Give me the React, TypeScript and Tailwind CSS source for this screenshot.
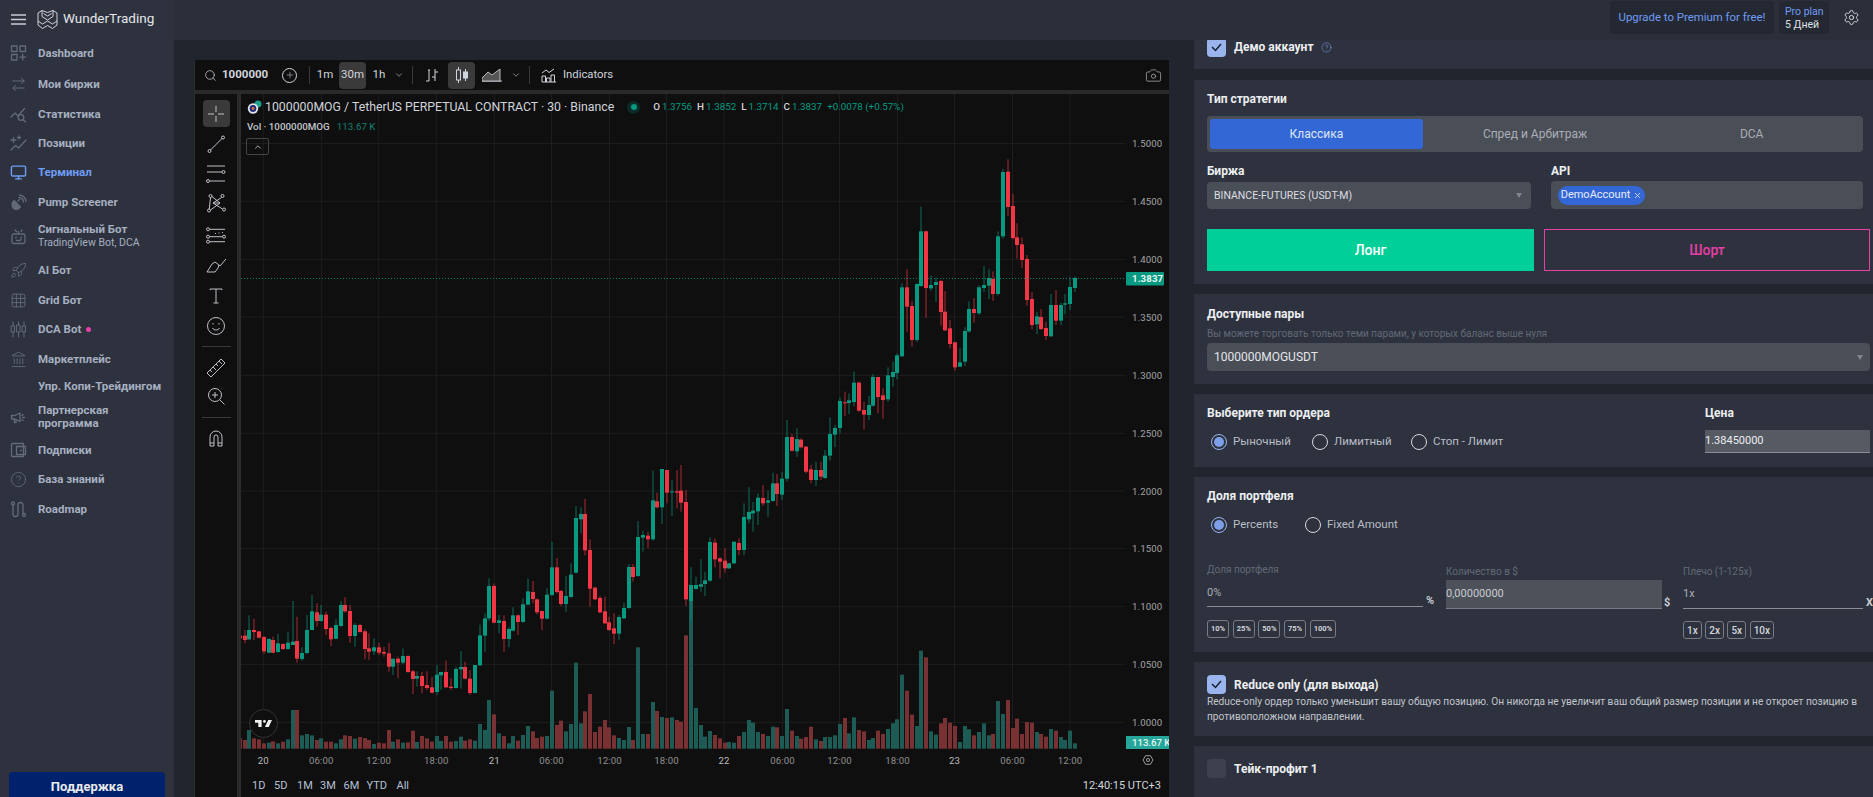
import { ArrowRightLeft, Camera, ChevronDown, ChevronUp, CircleHelp, Grid3x3, Landmark, Monitor, Plus, Rocket, Search, Settings, X } from 'lucide-react';
import type { ReactNode } from 'react';

// [up, bodyTop, bodyBottom, wickTop, wickBottom, volumeTop], numbers read off the chart (y = 470 + v / 3)
type Row = [number, number, number, number, number, number];
const lower: Row[] = [
  [0, 497, 505, 490, 512, 805], [0, 497, 510, 480, 520, 810], [1, 480, 508, 436, 510, 780], [0, 480, 486, 446, 510, 805], [0, 484, 503, 484, 505, 808],
  [0, 501, 544, 498, 552, 820], [1, 507, 548, 505, 550, 818], [0, 510, 548, 500, 550, 814], [1, 520, 546, 492, 548, 820], [0, 522, 537, 520, 540, 815],
  [1, 518, 537, 485, 540, 808], [1, 515, 525, 393, 525, 720], [0, 513, 566, 440, 578, 720], [1, 549, 567, 532, 572, 796], [1, 480, 549, 435, 552, 792],
  [1, 424, 480, 375, 480, 796], [0, 427, 453, 400, 470, 810], [1, 434, 453, 405, 455, 805], [0, 434, 477, 425, 495, 815], [0, 474, 508, 470, 528, 815],
  [1, 465, 506, 448, 508, 820], [1, 405, 468, 393, 470, 808], [0, 405, 424, 382, 428, 796], [0, 423, 498, 405, 518, 798], [1, 465, 498, 460, 530, 806],
  [0, 465, 486, 462, 488, 801], [0, 484, 537, 478, 568, 804], [0, 535, 545, 490, 570, 810], [1, 532, 544, 505, 555, 822], [0, 532, 548, 518, 555, 818],
  [0, 546, 551, 530, 560, 820], [0, 550, 590, 518, 605, 780], [1, 566, 590, 566, 615, 815], [0, 566, 578, 560, 625, 808], [1, 558, 578, 535, 582, 818],
  [0, 558, 606, 556, 608, 817], [0, 604, 627, 600, 672, 782], [1, 618, 626, 604, 650, 816], [0, 618, 648, 606, 670, 798], [0, 645, 654, 604, 660, 805],
  [0, 652, 668, 620, 670, 815], [1, 614, 666, 585, 675, 798], [1, 606, 616, 605, 660, 813], [0, 606, 652, 572, 654, 798], [0, 650, 654, 625, 660, 815],
  [1, 597, 654, 590, 656, 813], [1, 591, 598, 543, 655, 800], [0, 591, 626, 575, 628, 812], [0, 626, 669, 600, 675, 808], [1, 585, 669, 585, 670, 812],
  [1, 496, 586, 464, 588, 762], [1, 445, 497, 430, 545, 780], [1, 348, 445, 325, 452, 690], [0, 348, 458, 340, 460, 733], [1, 451, 459, 435, 490, 790],
  [0, 453, 507, 436, 545, 798], [1, 477, 507, 470, 532, 820], [1, 436, 482, 412, 484, 798], [0, 436, 456, 433, 495, 812], [1, 403, 456, 385, 458, 795],
  [1, 364, 404, 326, 405, 768], [0, 366, 387, 333, 400, 784], [0, 388, 427, 385, 433, 804], [0, 423, 446, 422, 480, 800], [1, 374, 446, 355, 448, 798],
  [1, 292, 375, 216, 378, 662], [0, 292, 366, 264, 370, 765], [0, 363, 402, 360, 408, 752], [1, 378, 402, 318, 425, 784], [1, 314, 381, 280, 383, 762],
  [1, 144, 308, 108, 310, 578], [1, 132, 148, 112, 190, 760], [0, 132, 241, 86, 256, 724], [0, 240, 356, 208, 410, 672], [0, 353, 388, 350, 390, 786],
  [0, 384, 427, 378, 430, 770], [0, 424, 460, 380, 462, 750], [0, 457, 480, 440, 482, 772], [0, 475, 491, 430, 522, 796], [1, 441, 491, 435, 510, 804],
  [1, 414, 445, 398, 447, 810], [1, 291, 414, 282, 416, 771], [0, 291, 321, 282, 335, 810], [1, 201, 318, 153, 320, 532], [1, 195, 203, 182, 245, 792],
  [0, 197, 208, 185, 235, 792], [1, 91, 208, 2, 212, 696], [0, 94, 112, 68, 115, 723], [1, -3, 112, -3, 162, 741], [0, 0, 68, 0, 100, 744],
  [1, 64, 66, 30, 138, 742], [0, 64, 68, 0, 115, 750], [0, 62, 98, -15, 125, 755], [0, 96, 388, 60, 408, 496], [1, 345, 393, 292, 450, 390],
  [1, 345, 357, 320, 358, 714], [1, 343, 350, 268, 365, 765], [1, 331, 342, 305, 378, 800], [1, 216, 332, 202, 335, 783], [0, 218, 268, 205, 292, 795],
  [0, 265, 275, 262, 325, 805], [0, 272, 295, 235, 308, 818], [1, 280, 295, 278, 297, 816], [1, 215, 280, 215, 282, 818], [0, 219, 240, 205, 255, 798],
  [1, 141, 240, 100, 255, 786], [1, 126, 148, 52, 160, 750], [1, 122, 130, 96, 185, 758], [1, 83, 124, 70, 165, 786], [0, 84, 100, 45, 108, 792],
  [1, 91, 98, 62, 140, 798], [1, 40, 93, 8, 95, 770], [0, 40, 72, 12, 108, 772], [1, 26, 74, 5, 90, 798],
];

// same columns, but y = 140 + v / 3; volumeTop stays on the lower scale
const upper: Row[] = [
  [1, 891, 1016, 840, 1025, 717], [0, 891, 932, 882, 935, 782], [1, 897, 934, 865, 950, 798], [0, 899, 922, 895, 925, 806], [0, 920, 995, 918, 1000, 801],
  [0, 988, 1020, 975, 1030, 770], [1, 990, 1020, 965, 1038, 808], [0, 990, 1010, 965, 1020, 813], [1, 947, 1014, 930, 1016, 801], [1, 882, 947, 832, 962, 801],
  [1, 864, 884, 855, 922, 796], [1, 783, 864, 772, 880, 762], [0, 787, 789, 755, 828, 744], [1, 781, 789, 760, 822, 790], [1, 728, 786, 695, 798, 742],
  [0, 728, 812, 725, 815, 780], [0, 810, 824, 785, 868, 784], [1, 795, 825, 768, 840, 810], [1, 711, 797, 702, 800, 804], [0, 711, 771, 711, 820, 782],
  [0, 766, 780, 745, 836, 792], [1, 706, 778, 682, 785, 777], [1, 696, 711, 665, 740, 760], [1, 646, 699, 640, 718, 748], [1, 442, 649, 430, 650, 614],
  [0, 442, 500, 388, 575, 662], [0, 498, 600, 483, 620, 734], [1, 432, 600, 430, 606, 768], [1, 274, 438, 200, 440, 542], [0, 274, 444, 272, 533, 562],
  [1, 435, 445, 407, 452, 784], [1, 426, 435, 413, 486, 794], [0, 423, 516, 420, 557, 760], [0, 515, 571, 453, 573, 744], [0, 565, 612, 540, 625, 758],
  [0, 607, 682, 605, 692, 768], [1, 667, 680, 625, 682, 816], [1, 573, 665, 562, 678, 768], [1, 507, 574, 484, 578, 778], [0, 507, 519, 474, 548, 796],
  [1, 442, 520, 436, 525, 786], [1, 435, 444, 378, 455, 760], [1, 414, 437, 388, 477, 796], [0, 417, 462, 394, 483, 792], [1, 289, 462, 274, 466, 693],
  [1, 96, 289, 87, 296, 732], [0, 95, 201, 58, 228, 690], [0, 198, 294, 162, 298, 774], [0, 292, 315, 250, 356, 746], [0, 313, 360, 292, 384, 792],
  [0, 357, 480, 345, 497, 756], [0, 477, 555, 456, 568, 758], [1, 529, 553, 515, 582, 786], [0, 531, 567, 507, 570, 792], [0, 564, 588, 545, 600, 800],
  [1, 495, 589, 462, 590, 777], [0, 495, 542, 450, 555, 782], [1, 495, 542, 488, 555, 801], [1, 490, 494, 462, 523, 810], [1, 441, 492, 412, 510, 782],
  [1, 414, 444, 409, 456, 820],
];

const allRows = [...lower.map((r) => ({ r, base: 470 })), ...upper.map((r) => ({ r, base: 140 }))];

const prices = ['1.5000', '1.4500', '1.4000', '1.3500', '1.3000', '1.2500', '1.2000', '1.1500', '1.1000', '1.0500', '1.0000'];
const priceY = [143.5, 201.3, 259.3, 317, 375.3, 433.3, 491, 548.7, 606.7, 664.3, 722.3];
const gridX = [263.3, 321.3, 378.7, 436.3, 494.3, 551.5, 609.5, 666.5, 724, 782.5, 839.5, 897.5, 954.5, 1012.5, 1070];
const timeLabels = ['20', '06:00', '12:00', '18:00', '21', '06:00', '12:00', '18:00', '22', '06:00', '12:00', '18:00', '23', '06:00', '12:00'];

function Chart() {
  const n = allRows.length;
  return (
    <svg className="block" width="928" height="677" viewBox="241 94 928 677">
      {priceY.map((y) => <line key={y} x1="241" x2="1125" y1={y} y2={y} stroke="#1d1d1d" />)}
      {gridX.map((x) => <line key={x} x1={x} x2={x} y1="94" y2="749" stroke="#1d1d1d" />)}

      {allRows.map(({ r }, i) => {
        const x = Math.round(1075 - 4.8 * (n - 1 - i));
        const top = 470 + r[5] / 3;
        return <rect key={i} x={x - 2} y={top} width="4" height={748.7 - top} fill={r[0] ? '#1d5c54' : '#7a3134'} />;
      })}
      {allRows.map(({ r, base }, i) => {
        const x = Math.round(1075 - 4.8 * (n - 1 - i));
        const color = r[0] ? '#089981' : '#f23645';
        return (
          <g key={i} fill={color}>
            <rect x={x - 0.5} y={base + r[3] / 3} width="1" height={(r[4] - r[3]) / 3} opacity="0.7" />
            <rect x={x - 2} y={base + r[1] / 3} width="4" height={Math.max(1, (r[2] - r[1]) / 3)} />
          </g>
        );
      })}

      <line x1="241" x2="1125" y1="278.5" y2="278.5" stroke="#089981" strokeDasharray="1 2" opacity="0.8" />

      {prices.map((p, i) => (
        <text key={p} x="1132" y={priceY[i] + 3.5} fontSize="9.6" letterSpacing="0.15" fill="#a4a4a4">{p}</text>
      ))}
      <rect x="1126" y="272" width="38" height="13.5" rx="1" fill="#089981" />
      <text x="1132" y="282.3" fontSize="9.6" fontWeight="700" letterSpacing="0.15" fill="#e8f5f2">1.3837</text>
      <rect x="1126" y="736" width="43" height="13" fill="#26a69a" />
      <text x="1132" y="746" fontSize="9.6" fontWeight="500" fill="#e8f5f2">113.67 K</text>

      {timeLabels.map((t, i) => (
        <text key={i} x={gridX[i]} y="764" fontSize="9.6" letterSpacing="0.15" textAnchor="middle" fill={t.length === 2 ? '#bcbcbc' : '#8f8f8f'}>{t}</text>
      ))}
      <path d="M1143 760l2.5-4.3h5l2.5 4.3-2.5 4.3h-5z" fill="none" stroke="#9a9a9a" />
      <circle cx="1148" cy="760" r="1.6" fill="none" stroke="#9a9a9a" />
      <rect x="241" y="771" width="928" height="1" fill="#2e2e2e" />
    </svg>
  );
}

function Ico({ children, size = 17, w = 1.3 }: { children: ReactNode; size?: number; w?: number }) {
  return (
    <svg width={size} height={size} viewBox="0 0 17 17" fill="none" stroke="currentColor" strokeWidth={w} strokeLinecap="round" strokeLinejoin="round">
      {children}
    </svg>
  );
}

const navIcons: Record<string, ReactNode> = {
  dash: (
    <Ico><rect x="1.5" y="1" width="5.5" height="5.5" /><rect x="10" y="1" width="5.5" height="5.5" /><rect x="1.5" y="9.5" width="5.5" height="5.5" /><path d="M12.7 9.5v5.5M10 12.2h5.5" /></Ico>
  ),
  stat: (
    <Ico><path d="M1 11l4-4 3 3 6.5-7.5" /><circle cx="11" cy="11.5" r="2.8" /><path d="M13 13.5l2.5 2.5" /></Ico>
  ),
  pos: (
    <Ico><path d="M1 15l4.5-4.5 3 2.5L16 5" /><path d="M3.500 2.500v5M1 5h5M9 1v3M7.500 2.500h3" /></Ico>
  ),
  dish: (
    <Ico><path d="M4 6.500l6.500 6.500a5 5 0 0 1-7 1.500 5.500 5.500 0 0 1 .500-8z" fill="currentColor" /><path d="M9 3.500a5 5 0 0 1 4.500 4.500M9.500 1a7.500 7.500 0 0 1 6.500 6.500M8 7l1.500-1.500" /></Ico>
  ),
  bot: (
    <Ico><rect x="2" y="6" width="13" height="9.5" rx="1.5" /><path d="M8.500 6V3.500M5 2l1.500 1.500M12 2l-1 1.500M6 9v1M11 9v1M6.500 12.500h3.500l1-1" /></Ico>
  ),
  dca: (
    <Ico w={1}><path d="M3 1v15M8.500 1v15M14 1v15" /><rect x="1.5" y="5" width="3" height="6" fill="#2d323e" /><rect x="7" y="4" width="3" height="7" fill="#2d323e" /><rect x="12.5" y="5" width="3" height="6" fill="#2d323e" /></Ico>
  ),
  mega: (
    <Ico><path d="M1.500 6.500h3.500l5-2.500v8.500l-5-2.500H1.500zM4 10l.500 3.500h1.500L6 10.500" /><path d="M12 6.500l1-1M12.500 8.500h2M12 10.500l1 1" /></Ico>
  ),
  wallet: (
    <Ico><path d="M2.500 1.500h11v13h-11a1 1 0 0 1-1-1v-11a1 1 0 0 1 1-1z" /><path d="M15.500 4.500h-9v8h9zM10.500 8.500h1" /></Ico>
  ),
  road: (
    <Ico><circle cx="3" cy="2.5" r="1.5" /><circle cx="14" cy="14" r="1.5" /><path d="M3 4v9a2.500 2.500 0 0 0 5 0V4a2.500 2.500 0 0 1 5 0v8.500" /></Ico>
  ),
};

type NavItem = { h: string; icon?: ReactNode; label: string; sub?: string; active?: boolean; dot?: boolean };
const nav: NavItem[] = [
  { h: 'h-[31px]', icon: navIcons.dash, label: 'Dashboard' },
  { h: 'h-[30px]', icon: <ArrowRightLeft size={17} strokeWidth={1.4} />, label: 'Мои биржи' },
  { h: 'h-[30px]', icon: navIcons.stat, label: 'Статистика' },
  { h: 'h-[29px]', icon: navIcons.pos, label: 'Позиции' },
  { h: 'h-[28px]', icon: <Monitor size={17} strokeWidth={2} />, label: 'Терминал', active: true },
  { h: 'h-[32px]', icon: navIcons.dish, label: 'Pump Screener' },
  { h: 'h-[36px]', icon: navIcons.bot, label: 'Сигнальный Бот', sub: 'TradingView Bot, DCA' },
  { h: 'h-[32px]', icon: <Rocket size={17} strokeWidth={1.3} />, label: 'AI Бот' },
  { h: 'h-[28px]', icon: <Grid3x3 size={17} strokeWidth={1.3} />, label: 'Grid Бот' },
  { h: 'h-[30px]', icon: navIcons.dca, label: 'DCA Bot', dot: true },
  { h: 'h-[30px]', icon: <Landmark size={17} strokeWidth={1.3} />, label: 'Маркетплейс' },
  { h: 'h-[24px]', label: 'Упр. Копи-Трейдингом' },
  { h: 'h-[38px]', icon: navIcons.mega, label: 'Партнерская программа' },
  { h: 'h-[28px]', icon: navIcons.wallet, label: 'Подписки' },
  { h: 'h-[30px]', icon: <CircleHelp size={17} strokeWidth={1.2} />, label: 'База знаний' },
  { h: 'h-[30px]', icon: navIcons.road, label: 'Roadmap' },
];

function Sidebar() {
  return (
    <aside className="flex h-full w-[174px] shrink-0 flex-col overflow-hidden bg-[#2d323e]">
      <div className="flex h-[38px] shrink-0 items-center pl-[11px]">
        <svg width="15" height="11" viewBox="0 0 15 11" stroke="#c9ccd3" strokeWidth="1.3"><path d="M0 1h15M0 5.500h15M0 10h15" /></svg>
        <svg className="ml-[11px]" width="21" height="21" viewBox="0 0 21 21" fill="none" stroke="#e4e6ea" strokeWidth="0.9" strokeLinejoin="round">
          <path d="M1 4l4-2.500 5.500 2 5.500-2 4 2.500v12l-4.500 3.500-5-3-5 3L1 16z" />
          <path d="M5 1.500v6l5.500 3.500 5.500-3.500v-6M6.500 4.500l4 2.500 4-2.500M1 12l4.500 3 5-3 5 3 4.500-3" />
        </svg>
        <span className="ml-[5px] text-[13.5px] leading-none text-[#e4e6ea]">WunderTrading</span>
      </div>
      {nav.map((item) => (
        <div key={item.label} className={`${item.h} flex shrink-0 items-center`}>
          <span className={`flex w-[38px] shrink-0 justify-center pr-[2px] ${item.active ? 'text-[#6f9cf4]' : 'text-[#646a78]'}`}>{item.icon}</span>
          <div className={`max-w-[125px] text-[11.5px] leading-[13px] font-bold ${item.active ? 'text-[#6f9cf4]' : 'text-[#a6afc0]'}`}>
            {item.label}
            {item.dot && <span className="ml-[5px] inline-block h-[5px] w-[5px] rounded-full bg-[#e83fa5] align-middle" />}
            {item.sub && <div className="text-[10.5px] font-normal whitespace-nowrap">{item.sub}</div>}
          </div>
        </div>
      ))}
      <div className="mt-auto -mb-[5px] px-[9px]">
        <button className="h-[30px] w-full rounded-t-[4px] bg-[#00216b] text-[13px] font-bold text-[#e8eaee]">Поддержка</button>
      </div>
    </aside>
  );
}

function Sep({ className = '' }: { className?: string }) {
  return <span className={`mr-[5px] ml-[5px] h-[18px] w-px shrink-0 bg-[#3a3a3a] ${className}`} />;
}

function TopToolbar() {
  return (
    <div className="flex h-[30px] shrink-0 items-center bg-[#0f0f0f] pl-[9px] pr-[4px] text-[11.5px] text-[#d1d4dc]">
      <Search size={13} strokeWidth={1.3} />
      <span className="ml-[5px] w-[60px] text-[11.5px] font-bold">1000000</span>
      <span className="flex h-[15px] w-[15px] items-center justify-center rounded-full border border-[#d1d4dc]"><Plus size={10} strokeWidth={1.2} /></span>
      <Sep className="ml-[12px]" />
      <span className="w-[20px] text-center">1m</span>
      <span className="ml-[4px] flex h-[27px] w-[27px] items-center justify-center rounded-[4px] bg-[#3a3a3a]">30m</span>
      <span className="w-[26px] text-center">1h</span>
      <ChevronDown size={10} className="ml-[2px] shrink-0 text-[#9a9a9a]" />
      <Sep className="ml-[8px]" />
      <svg className="ml-[7px] shrink-0" width="14" height="14" viewBox="0 0 14 14" fill="none" stroke="#d1d4dc"><path d="M1 13h3V2M4 3V1M10 1v12M10 4h3M7 9h3" /></svg>
      <span className="ml-[9px] flex h-[27px] w-[27px] shrink-0 items-center justify-center rounded-[4px] bg-[#3a3a3a]">
        <svg width="14" height="16" viewBox="0 0 14 16" fill="none" stroke="#d1d4dc"><path d="M3.500 0v16M10.500 2v12" /><rect x="1.5" y="3" width="4" height="10" fill="#3a3a3a" /><rect x="8.5" y="5" width="4" height="6" fill="#d1d4dc" /></svg>
      </span>
      <svg className="ml-[7px] shrink-0" width="20" height="14" viewBox="0 0 20 14" fill="none" stroke="#b6b9c0"><path d="M0 10l6-6 4 3 8-6v13H0z" fill="#555" /><path d="M0 13h20" /></svg>
      <ChevronDown size={10} className="ml-[9px] shrink-0 text-[#9a9a9a]" />
      <Sep className="ml-[8px]" />
      <svg className="ml-[6px] shrink-0" width="15" height="15" viewBox="0 0 15 15" fill="none" stroke="#d1d4dc"><path d="M1 14V8h3.500v6M5.500 14V10H9v4M10 14V7h3.500v7M1 14h14M1 5l4-3 3 2.500L13 1" /></svg>
      <span className="ml-[7px] text-[11.3px]">Indicators</span>
      <Camera size={17} strokeWidth={1} className="mr-[3px] ml-auto text-[#b6b9c0]" />
    </div>
  );
}

const toolIcons: { h: string; icon: ReactNode; active?: boolean }[] = [
  { h: 'h-[27px]', active: true, icon: <path d="M14 6v6M14 16v6M6 14h6M16 14h6" /> },
  { h: 'h-[34px]', icon: <g><circle cx="7.5" cy="21" r="1.5" /><circle cx="21" cy="7.5" r="1.5" /><path d="M8.500 20L20 8.500" /></g> },
  { h: 'h-[26px]', icon: <g><path d="M5 6h18M5 12h15M8 21h15" /><circle cx="21.5" cy="12" r="1.5" /><circle cx="6" cy="21" r="1.5" /></g> },
  { h: 'h-[32px]', icon: <g><circle cx="7" cy="21.5" r="1.5" /><circle cx="8.5" cy="7" r="1.5" /><circle cx="20.5" cy="7" r="1.5" /><circle cx="22" cy="20.5" r="1.5" /><path d="M8.500 8.500L7.300 20M10 7.500l8 6.500-9.500 7M19.500 8.500L11 14l9.500 6M11 14h7" /></g> },
  { h: 'h-[32px]', icon: <g><path d="M7.500 8.300H23M7.500 15.700h13M7.500 20.700H23" /><circle cx="6" cy="8.3" r="1.5" /><circle cx="6" cy="15.7" r="1.5" /><circle cx="6" cy="20.7" r="1.5" /><circle cx="22" cy="15.7" r="1.5" /><path d="M13 12.500h1M16.500 12h1M20 11.500h1" /></g> },
  { h: 'h-[30px]', icon: <g><path d="M5 20l5-8 3-2 4 3-1 3-3 4z" /><path d="M17 13l1 1 6-7" /></g> },
  { h: 'h-[30px]', icon: <path d="M8 8V7h12v1M14 7v14M11.500 21h5" /> },
  { h: 'h-[30px]', icon: <g><circle cx="14" cy="14" r="8.5" /><path d="M10.500 16c1 1.500 2 2 3.500 2s2.500-.500 3.500-2M11 11v1.500M17 11v1.500" /></g> },
];

function ToolBtn({ icon, active }: { icon: ReactNode; active?: boolean }) {
  return (
    <span className={`flex h-[27px] w-[27px] items-center justify-center rounded-[4px] ${active ? 'bg-[#3a3a3a]' : ''}`}>
      <svg className="shrink-0" width="28" height="28" viewBox="0 0 28 28" fill="none" stroke="#d1d4dc" strokeWidth="0.9">{icon}</svg>
    </span>
  );
}

function LeftToolbar() {
  return (
    <div className="flex h-full w-[42px] shrink-0 flex-col items-center bg-[#0f0f0f] pt-[6px]">
      {toolIcons.map((t, i) => (
        <div key={i} className={`${t.h} flex w-full shrink-0 items-center justify-center`}><ToolBtn icon={t.icon} active={t.active} /></div>
      ))}
      <div className="mt-[5px] h-px w-[29px] bg-[#3a3a3a]" />
      <div className="mt-[7px]"><ToolBtn icon={<g><path d="M5 19L19 5l4 4L9 23z" /><path d="M8 16l2 2M11 13l3 3M14 10l2 2M17 7l3 3" /></g>} /></div>
      <div className="mt-px"><ToolBtn icon={<g><circle cx="13" cy="13" r="6.5" /><path d="M13 10v6M10 13h6M18 18l4.500 4.500" /></g>} /></div>
      <div className="mt-[8px] h-px w-[29px] bg-[#3a3a3a]" />
      <div className="mt-[6px]"><ToolBtn icon={<path d="M8 22v-9a6 6 0 0 1 12 0v9h-4v-9a2 2 0 0 0-4 0v9zM8 19h4M16 19h4" />} /></div>
    </div>
  );
}

function ChartPane() {
  return (
    <div className="flex min-w-0 flex-1 flex-col bg-[#0f0f0f]">
      <div className="relative h-[677px] shrink-0">
        <Chart />
        <div className="absolute top-[6px] left-[6px] flex h-[14px] items-center text-[12.3px] leading-none whitespace-nowrap text-[#d1d4dc]">
          <svg width="15" height="14" viewBox="0 0 15 14"><circle cx="11" cy="4" r="3.5" fill="#1c9e8c" /><circle cx="6" cy="8.5" r="5.2" fill="#e1e4ec" /><circle cx="6" cy="8.5" r="3.4" fill="#1f2e78" /><circle cx="6" cy="8.5" r="1.4" fill="#e9733a" /></svg>
          <span className="ml-[3px]">1000000MOG / TetherUS PERPETUAL CONTRACT · 30 · Binance</span>
          <span className="ml-[13px] flex h-[13px] w-[13px] items-center justify-center rounded-full bg-[#0c2a26]"><span className="h-[6px] w-[6px] rounded-full bg-[#089981]" /></span>
          <span className="ml-[13px] flex gap-[5px] text-[9.8px] text-[#089981]">
            <span><b className="mr-[2px] font-medium text-[#d1d4dc]">O</b>1.3756</span>
            <span><b className="mr-[2px] font-medium text-[#d1d4dc]">H</b>1.3852</span>
            <span><b className="mr-[2px] font-medium text-[#d1d4dc]">L</b>1.3714</span>
            <span><b className="mr-[2px] font-medium text-[#d1d4dc]">C</b>1.3837</span>
            <span>+0.0078 (+0.57%)</span>
          </span>
        </div>
        <div className="absolute top-[26px] left-[6px] flex items-center text-[9.8px] leading-[13px] whitespace-nowrap">
          <span className="font-medium text-[#c4c6cc]">Vol · 1000000MOG</span>
          <span className="ml-[7px] text-[#14806f]">113.67 K</span>
        </div>
        <button className="absolute top-[44px] left-[5px] flex h-[17px] w-[23px] items-center justify-center rounded-[2px] border border-[#444] text-[#c4c6cc]"><ChevronUp size={10} /></button>
        <div className="absolute top-[615px] left-[8px] flex h-[29px] w-[29px] items-center justify-center rounded-full border border-[#333] bg-[#0f0f0f]">
          <svg width="17" height="11" viewBox="0 0 36 15" fill="#f0f0f0"><path d="M14 0H0v6h7v9h7V0ZM29 15H21l7-15h8L29 15ZM20 6a3 3 0 1 0 0-6 3 3 0 0 0 0 6Z" /></svg>
        </div>
      </div>
      <div className="flex h-[25px] shrink-0 items-center pt-[6px] pr-[8px] pl-[11px] text-[11px] text-[#b6c1d6]">
        <span className="w-[22px]">1D</span>
        <span className="w-[23px]">5D</span>
        <span className="w-[23px]">1M</span>
        <span className="w-[23.5px]">3M</span>
        <span className="w-[23px]">6M</span>
        <span className="w-[30px]">YTD</span>
        <span>All</span>
        <span className="ml-auto text-[11px] text-[#d1d4dc]">12:40:15 UTC+3</span>
      </div>
    </div>
  );
}

function Card({ className, children }: { className: string; children: ReactNode }) {
  return <section className={`shrink-0 overflow-hidden bg-[#2d323e] pl-[13px] ${className}`}>{children}</section>;
}

function Check({ on = true }: { on?: boolean }) {
  return (
    <span className={`flex h-[19px] w-[19px] shrink-0 items-center justify-center rounded-[4px] ${on ? 'bg-[#9ab5ee]' : 'bg-[#3c414d]'}`}>
      {on && <svg width="11" height="9" viewBox="0 0 11 9" fill="none" stroke="#16202f" strokeWidth="1.5"><path d="M1 4l3.500 3.500L10 1" /></svg>}
    </span>
  );
}

function Radio({ label, on, className }: { label: string; on?: boolean; className: string }) {
  return (
    <span className={`flex items-center ${className}`}>
      <span className={`ml-[4px] flex h-[16px] w-[16px] items-center justify-center rounded-full border ${on ? 'border-[#9ab5ee]' : 'border-[#d5d8de]'}`}>
        {on && <span className="h-[10px] w-[10px] rounded-full bg-[#7d9fe8]" />}
      </span>
      <span className="ml-[6px] text-[11.5px] text-[#b9bdc6]">{label}</span>
    </span>
  );
}

function Title({ children }: { children: ReactNode }) {
  return <div className="h-[16px] text-[12px] leading-[16px] font-bold text-[#eceef1]">{children}</div>;
}

function SelectArrow() {
  return <span className="ml-auto h-0 w-0 border-x-[3px] border-t-[5px] border-x-transparent border-t-[#80848c]" />;
}

function RightPanel() {
  return (
    <div className="flex h-full min-w-0 flex-1 flex-col gap-[10px] overflow-hidden text-[#d4d6db]">
      <Card className="mb-px h-[29px]">
        <div className="flex items-start">
          <span className="-mt-[2px]"><Check /></span>
          <span className="ml-[8px] text-[12px] leading-[14px] font-bold text-[#eceef1]">Демо аккаунт</span>
          <CircleHelp size={11} strokeWidth={1.2} className="mt-[2px] ml-[7px] text-[#7d9fe8]" />
        </div>
      </Card>

      <Card className="h-[204px] pt-[11px]">
        <Title>Тип стратегии</Title>
        <div className="mt-[9px] grid h-[36px] w-[656px] grid-cols-3 rounded-[4px] bg-[#4a4e57] p-[3px] text-center text-[12px] leading-[30px] text-[#a9adb5]">
          <span className="mr-[4px] rounded-[3px] bg-[#3467d6] text-[#dfe6f5]">Классика</span>
          <span>Спред и Арбитраж</span>
          <span>DCA</span>
        </div>
        <div className="mt-[11px] grid w-[656px] grid-cols-[324px_312px] gap-x-[20px]">
          <div>
            <Title>Биржа</Title>
            <div className="mt-[3px] flex h-[27px] items-center rounded-[4px] bg-[#4a4e57] pr-[9px] pl-[7px] text-[10.5px] text-[#dcdee2]">
              BINANCE-FUTURES (USDT-M)
              <SelectArrow />
            </div>
          </div>
          <div>
            <Title>API</Title>
            <div className="mt-[2px] flex h-[28px] items-center rounded-[4px] bg-[#4a4e57] pl-[7px]">
              <span className="flex h-[19px] w-[87px] items-center justify-center gap-[3px] rounded-full bg-[#3467d6] text-[11px] text-[#e6ecf8]">
                DemoAccount <X size={9} strokeWidth={2} />
              </span>
            </div>
          </div>
        </div>
        <div className="mt-[20px] flex h-[42px] w-[663px] gap-[10px] text-[14px] font-medium">
          <button className="w-[327px] bg-[#00d098] text-white">Лонг</button>
          <button className="flex-1 border border-[#e63fa5] text-[#e63fa5]">Шорт</button>
        </div>
      </Card>

      <Card className="h-[90px] pt-[12px]">
        <Title>Доступные пары</Title>
        <div className="mt-[4px] text-[10px] leading-[15px] text-[#636976]">Вы можете торговать только теми парами, у которых баланс выше нуля</div>
        <div className="mt-[2px] flex h-[28px] w-[663px] items-center rounded-[4px] bg-[#4a4e57] pr-[7px] pl-[7px] text-[12px] text-[#e4e6ea]">
          1000000MOGUSDT
          <SelectArrow />
        </div>
      </Card>

      <Card className="flex h-[73px] pt-[11px]">
        <div className="w-[498px]">
          <Title>Выберите тип ордера</Title>
          <div className="mt-[13px] flex h-[16px]">
            <Radio on label="Рыночный" className="w-[101px]" />
            <Radio label="Лимитный" className="w-[99px]" />
            <Radio label="Стоп - Лимит" className="w-[120px]" />
          </div>
        </div>
        <div className="w-[165px]">
          <Title>Цена</Title>
          <div className="mt-[9px] flex h-[23px] items-center border-b border-[#8a8d93] bg-[#565a62] text-[11px] text-[#eceef1]">1.38450000</div>
        </div>
      </Card>

      <Card className="h-[175px] pt-[11px]">
        <Title>Доля портфеля</Title>
        <div className="mt-[13px] flex h-[16px]">
          <Radio on label="Percents" className="w-[94px]" />
          <Radio label="Fixed Amount" className="w-[120px]" />
        </div>
        <div className="mt-[30px] flex">
          <div className="w-[239px]">
            <div className="h-[14px] text-[10px] leading-[14px] text-[#636976]">Доля портфеля</div>
            <div className="mt-[6px] flex items-end">
              <div className="h-[24px] w-[216px] border-b border-[#8a8d93] text-[11px] leading-[20px] text-[#a9adb5]">0%</div>
              <span className="ml-[3px] -mb-[2px] text-[11px] font-bold text-[#c8cad0]">%</span>
            </div>
            <div className="mt-[13px] flex gap-[3.5px]">
              {['10%', '25%', '50%', '75%', '100%'].map((p) => (
                <span key={p} className="flex h-[18px] items-center rounded-[3px] border border-[#777b84] px-[3px] text-[7.5px] font-bold text-[#d4d6db]">{p}</span>
              ))}
            </div>
          </div>
          <div className="mt-[2px] w-[237px]">
            <div className="h-[14px] text-[10px] leading-[14px] text-[#636976]">Количество в $</div>
            <div className="mt-px flex items-end">
              <div className="flex h-[29px] w-[216px] items-center border-b border-[#777b84] bg-[#4d525a] text-[11px] text-[#c8cad0]">0,00000000</div>
              <span className="ml-[2px] -mb-[2px] text-[11px] font-bold text-[#c8cad0]">$</span>
            </div>
          </div>
          <div className="mt-[2px] flex-1">
            <div className="h-[14px] text-[10px] leading-[14px] text-[#636976]">Плечо (1-125x)</div>
            <div className="mt-px flex items-end">
              <div className="flex h-[29px] w-[180px] items-center border-b border-[#8a8d93] text-[11px] text-[#a9adb5]">1x</div>
              <span className="ml-[3px] -mb-[2px] text-[11px] font-bold text-[#c8cad0]">X</span>
            </div>
            <div className="mt-[12px] flex gap-[3.5px]">
              {['1x', '2x', '5x', '10x'].map((p) => (
                <span key={p} className="flex h-[18px] items-center rounded-[3px] border border-[#777b84] px-[3px] text-[10px] font-medium text-[#d4d6db]">{p}</span>
              ))}
            </div>
          </div>
        </div>
      </Card>

      <Card className="h-[74px] pt-[13px]">
        <div className="flex items-center">
          <Check />
          <span className="ml-[8px] text-[12px] font-bold text-[#eceef1]">Reduce only (для выхода)</span>
        </div>
        <p className="text-[10.15px] leading-[15px] whitespace-nowrap text-[#c2c5cc]">
          Reduce-only ордер только уменьшит вашу общую позицию. Он никогда не увеличит ваш общий размер позиции и не откроет позицию в<br />
          противоположном направлении.
        </p>
      </Card>

      <Card className="h-[60px] pt-[13px]">
        <div className="flex items-center">
          <Check on={false} />
          <span className="ml-[8px] text-[12px] font-bold text-[#eceef1]">Тейк-профит 1</span>
        </div>
      </Card>
    </div>
  );
}

export default function App() {
  return (
    <div className="flex h-[797px] w-[1873px] overflow-hidden bg-[#21252e] [font-family:Roboto,'Noto_Sans',sans-serif]">
      <Sidebar />
      <div className="flex min-w-0 flex-1 flex-col">
        <header className="flex h-10 shrink-0 items-start justify-end bg-[#2a2f3a] pt-px pr-[13px]">
          <span className="flex h-[33px] w-[164px] shrink-0 items-center justify-center rounded-[4px] bg-[#242833] text-[11.4px] whitespace-nowrap text-[#6f9cf4]">Upgrade to Premium for free!</span>
          <span className="ml-[5px] flex h-[33px] w-[50px] shrink-0 flex-col justify-center rounded-[4px] bg-[#242833] pl-[6px] text-[10.5px] leading-[13px] whitespace-nowrap text-[#6f9cf4]">
            Pro plan
            <span className="text-[#dfe1e6]">5 Дней</span>
          </span>
          <Settings size={17} strokeWidth={1.3} className="mt-[8px] ml-[14px] shrink-0 text-[#dfe1e6]" />
        </header>
        <main className="flex min-h-0 flex-1">
          <div className="w-[1020px] shrink-0 pt-5 pr-[25px] pl-5">
            <div className="flex h-[737px] flex-col border-l border-[#2e2e2e] bg-[#2a2a2a]">
              <TopToolbar />
              <div className="mt-[4px] flex min-h-0 flex-1 gap-[4px]">
                <LeftToolbar />
                <ChartPane />
              </div>
            </div>
          </div>
          <RightPanel />
        </main>
      </div>
    </div>
  );
}
